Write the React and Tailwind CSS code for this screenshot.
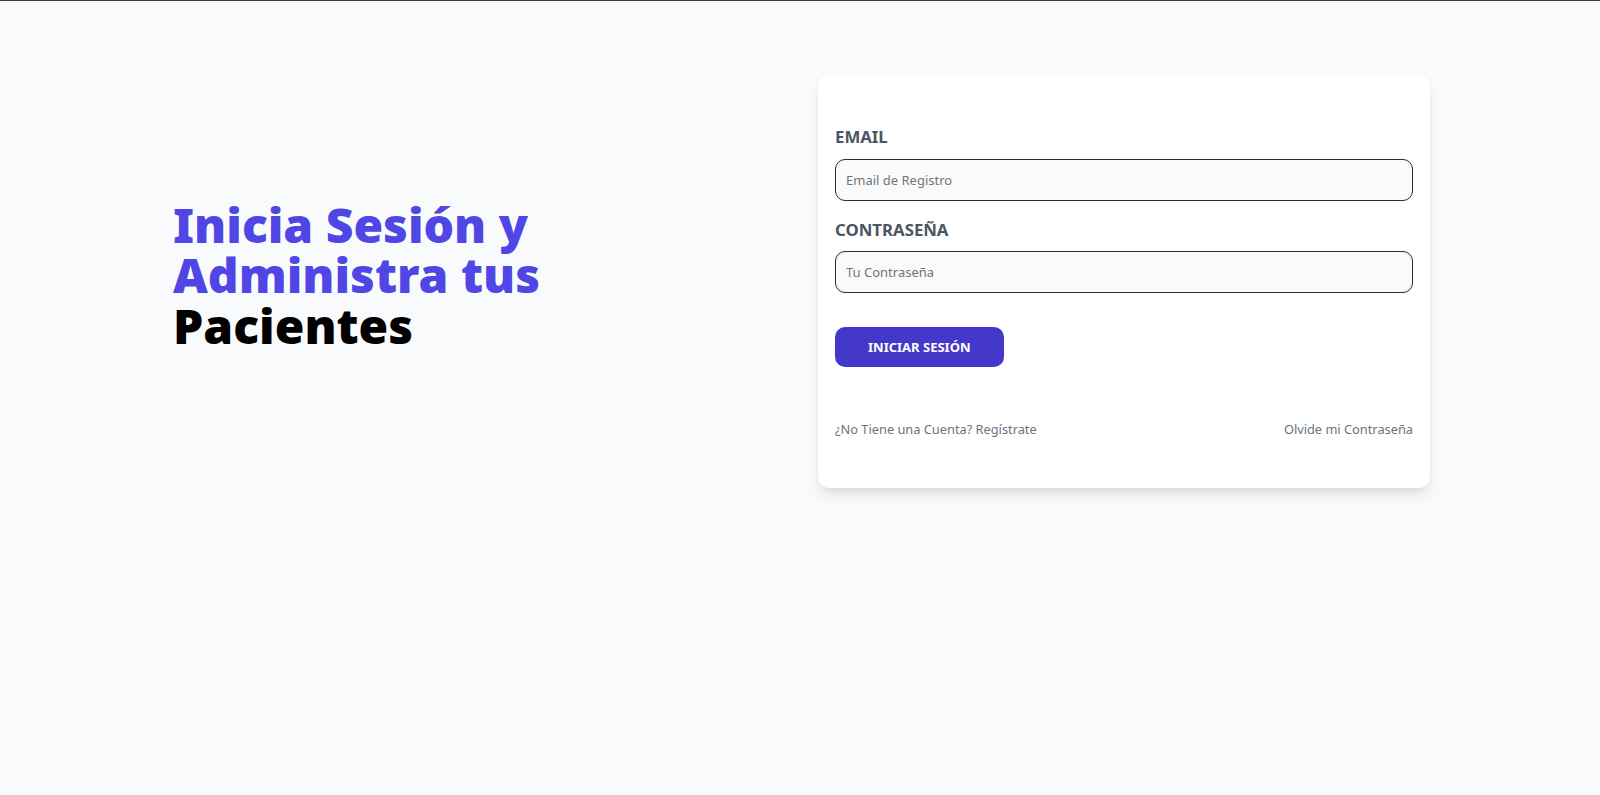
export default function App() {
  return (
    <div
      className="min-h-screen border-t border-[#3c3c3c] bg-[#f9fafb]"
      style={{ fontFamily: '"Noto Sans", "Open Sans", sans-serif' }}
    >
      <main className="grid grid-cols-[612px_612px] items-center gap-[33px] pl-[173px] pt-[74px]">
        <h1 className="pb-[12px] text-[48px] leading-[50.5px] font-black text-[#4f46e5]">
          <span className="block">Inicia Sesión y</span>
          <span className="block">Administra tus</span>
          <span className="block text-black">Pacientes</span>
        </h1>

        <div className="rounded-[10px] bg-white px-[17px] pt-[50px] pb-[49px] shadow-[0_8px_14px_-3px_rgba(0,0,0,0.12),0_3px_6px_-4px_rgba(0,0,0,0.1)]">
          <form>
            <div>
              <label
                htmlFor="email"
                className="block text-[16.8px] leading-[23.5px] font-bold uppercase text-[#4b5563]"
              >
                Email
              </label>
              <input
                id="email"
                type="email"
                placeholder="Email de Registro"
                className="mt-[10px] block w-full rounded-[10px] border border-[#2b2b2b] bg-[#f9fafb] px-[10px] py-[10px] text-[13px] leading-[20px] placeholder:text-[#757575]"
              />
            </div>

            <div className="mt-[17px]">
              <label
                htmlFor="password"
                className="block text-[16.8px] leading-[23.5px] font-bold uppercase text-[#4b5563]"
              >
                Contraseña
              </label>
              <input
                id="password"
                type="password"
                placeholder="Tu Contraseña"
                className="mt-[10px] block w-full rounded-[10px] border border-[#2b2b2b] bg-[#f9fafb] px-[10px] py-[10px] text-[13px] leading-[20px] placeholder:text-[#757575]"
              />
            </div>

            <button
              type="submit"
              className="mt-[34px] block rounded-[10px] bg-[#4338ca] px-[33px] py-[10px] text-[13px] leading-[20px] font-bold uppercase text-white"
            >
              Iniciar Sesión
            </button>
          </form>

          <nav className="mt-[52px] flex justify-between text-[12.8px] leading-[20px] text-[#6b7280]">
            <a href="#">¿No Tiene una Cuenta? Regístrate</a>
            <a href="#">Olvide mi Contraseña</a>
          </nav>
        </div>
      </main>
    </div>
  );
}
